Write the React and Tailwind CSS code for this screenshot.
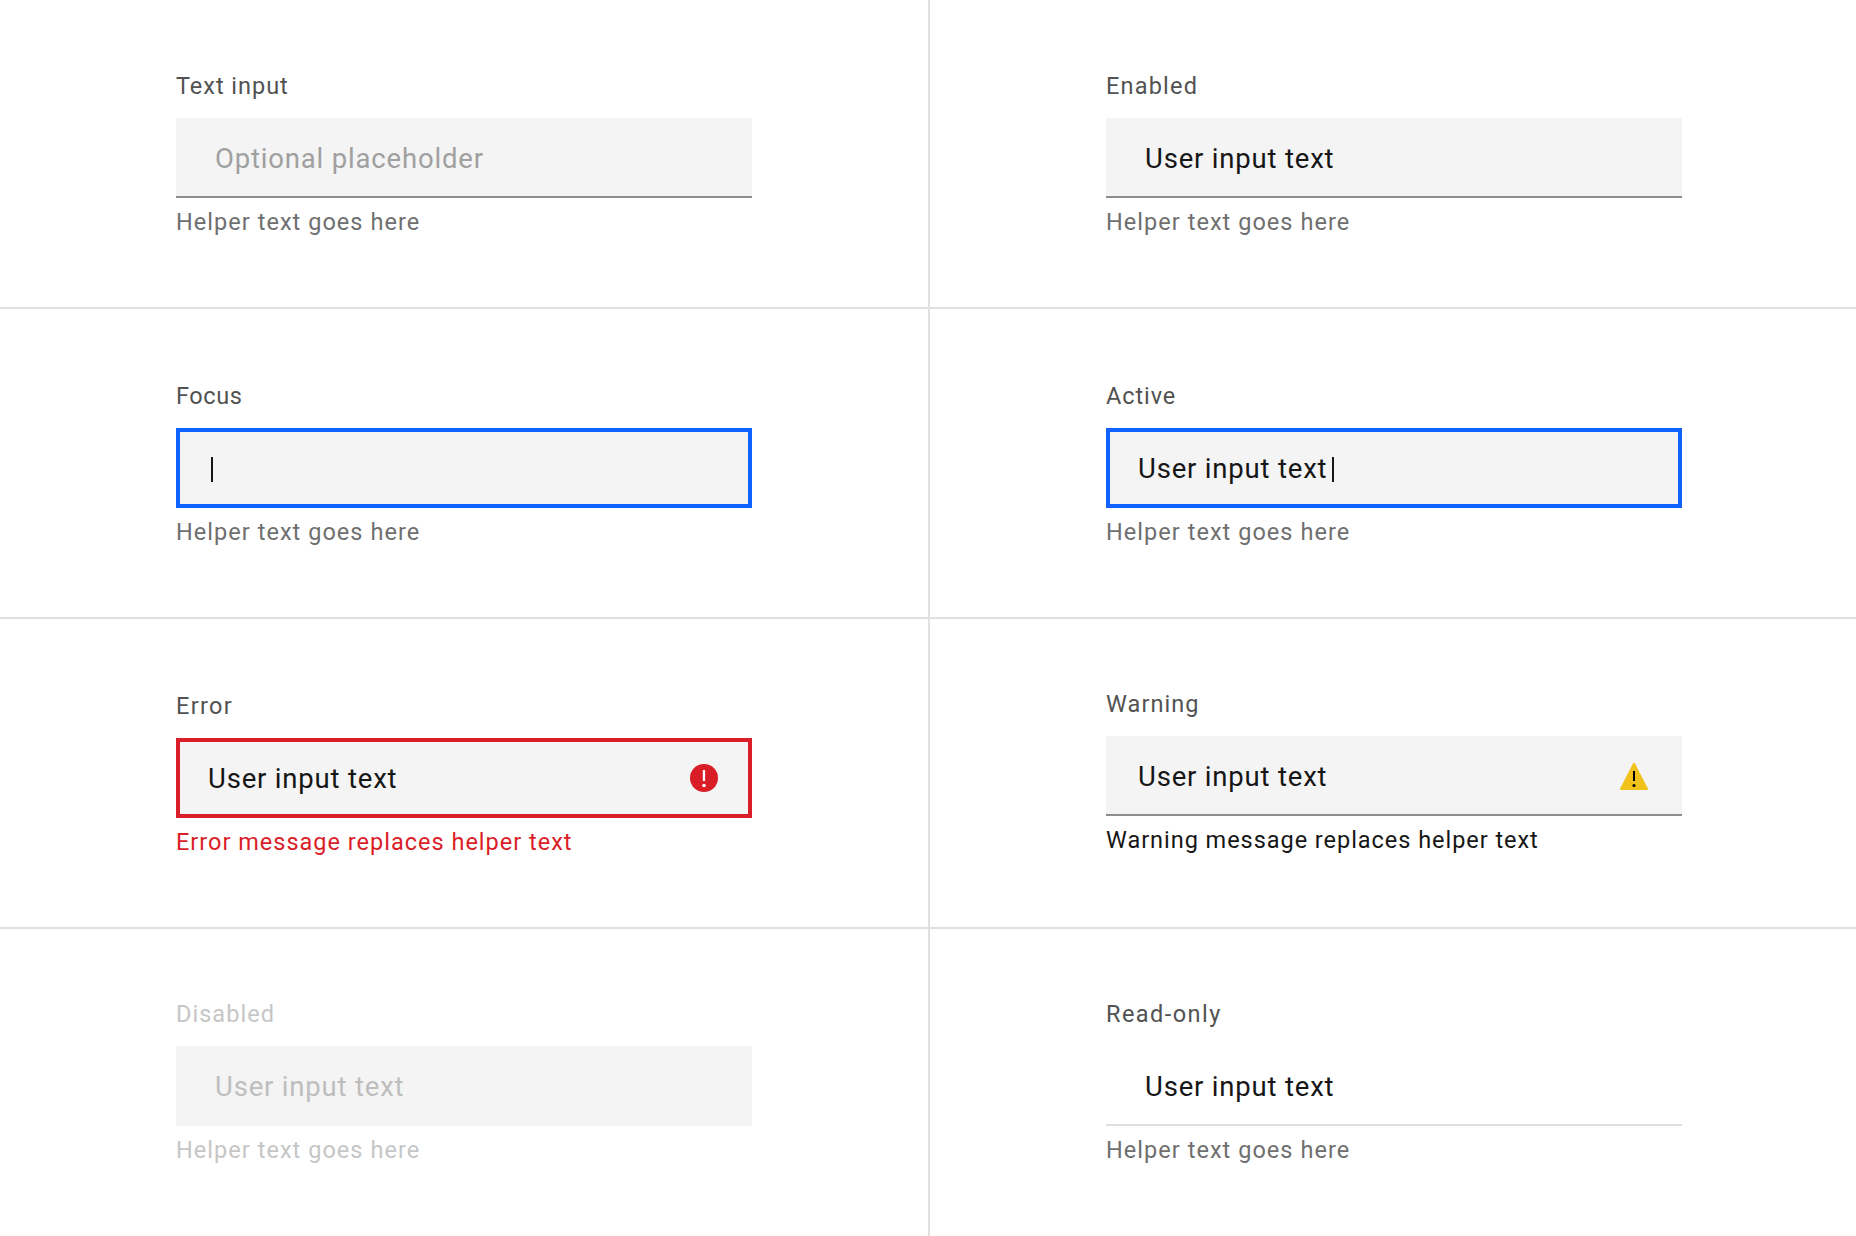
function ErrorIcon() {
  return (
    <svg width="28" height="28" viewBox="0 0 28 28" className="shrink-0">
      <circle cx="14" cy="14" r="14" fill="#da1e28" />
      <rect x="12.8" y="6" width="2.3" height="11" fill="#fff" />
      <circle cx="14" cy="21.4" r="1.75" fill="#fff" />
    </svg>
  );
}

function WarningIcon() {
  return (
    <svg width="28" height="28" viewBox="0 0 28 28" className="shrink-0">
      <path
        d="M13.1 1.3a1 1 0 0 1 1.8 0L27.9 26.6a.9.9 0 0 1-.8 1.3H.9a.9.9 0 0 1-.8-1.3Z"
        fill="#f1c21b"
      />
      <rect x="13" y="9" width="2" height="10" fill="#000" />
      <circle cx="14" cy="23.5" r="1.6" fill="#000" />
    </svg>
  );
}

function Caret({ className = "" }) {
  return <span className={`mt-[3px] h-[25px] w-0.5 shrink-0 bg-[#161616] ${className}`} />;
}

const boxStyles = {
  underline: "bg-[#f4f4f4] shadow-[inset_0_-2px_0_#8d8d8d]",
  focus: "bg-[#f4f4f4] shadow-[inset_0_0_0_4px_#0f62fe]",
  error: "bg-[#f4f4f4] shadow-[inset_0_0_0_4px_#da1e28]",
  disabled: "bg-[#f4f4f4]",
  readonly: "shadow-[inset_0_-2px_0_#e0e0e0]",
};

function Field({
  label,
  labelClass,
  box,
  pad = "pl-[39px]",
  value,
  valueClass = "tracking-[0.81px] text-[#161616]",
  helper = "Helper text goes here",
  helperClass = "tracking-[1.04px] text-[#6f6f6f]",
  caret,
  icon,
}) {
  return (
    <div className="flex w-[576px] flex-col">
      <div className={`mb-4 text-[23.5px] leading-8 ${labelClass}`}>{label}</div>
      <div className={`flex h-20 items-center pr-[34px] ${pad} ${boxStyles[box]}`}>
        {value && (
          <span className={`pt-px text-[27.5px] leading-10 ${valueClass}`}>{value}</span>
        )}
        {caret}
        {icon && <span className="ml-auto">{icon}</span>}
      </div>
      <div className={`mt-2 text-[23.5px] leading-8 ${helperClass}`}>{helper}</div>
    </div>
  );
}

function Cell({ className, children }) {
  return <section className={`border-[#e0e0e0] pl-44 ${className}`}>{children}</section>;
}

export default function App() {
  return (
    <main className="grid h-[1236px] w-[1856px] grid-cols-[930px_926px] grid-rows-[309px_310px_310px_307px] overflow-hidden whitespace-nowrap bg-white font-['Roboto',sans-serif]">
      <Cell className="border-r-2 border-b-2 pt-[70px]">
        <Field
          label="Text input"
          labelClass="tracking-[0.97px] text-[#525252]"
          box="underline"
          value="Optional placeholder"
          valueClass="tracking-[0.82px] text-[#a0a0a0]"
        />
      </Cell>
      <Cell className="border-b-2 pt-[70px]">
        <Field
          label="Enabled"
          labelClass="tracking-[1.2px] text-[#525252]"
          box="underline"
          value="User input text"
        />
      </Cell>
      <Cell className="border-r-2 border-b-2 pt-[71px]">
        <Field
          label="Focus"
          labelClass="tracking-[0.6px] text-[#525252]"
          box="focus"
          pad="pl-[35px]"
          caret={<Caret />}
        />
      </Cell>
      <Cell className="border-b-2 pt-[71px]">
        <Field
          label="Active"
          labelClass="tracking-[0.9px] text-[#525252]"
          box="focus"
          pad="pl-8"
          value="User input text"
          caret={<Caret className="ml-[5px]" />}
        />
      </Cell>
      <Cell className="border-r-2 border-b-2 pt-[71px]">
        <Field
          label="Error"
          labelClass="tracking-[1.3px] text-[#525252]"
          box="error"
          pad="pl-8"
          value="User input text"
          icon={<ErrorIcon />}
          helper="Error message replaces helper text"
          helperClass="tracking-[1px] text-[#da1e28]"
        />
      </Cell>
      <Cell className="border-b-2 pt-[69px]">
        <Field
          label="Warning"
          labelClass="tracking-[1.08px] text-[#525252]"
          box="underline"
          pad="pl-8"
          value="User input text"
          icon={<WarningIcon />}
          helper="Warning message replaces helper text"
          helperClass="tracking-[0.96px] text-[#161616]"
        />
      </Cell>
      <Cell className="border-r-2 pt-[69px]">
        <Field
          label="Disabled"
          labelClass="tracking-[1.03px] text-[#c6c6c6]"
          box="disabled"
          value="User input text"
          valueClass="tracking-[0.81px] text-[#bebebe]"
          helperClass="tracking-[1.04px] text-[#c6c6c6]"
        />
      </Cell>
      <Cell className="pt-[69px]">
        <Field
          label="Read-only"
          labelClass="tracking-[1.45px] text-[#525252]"
          box="readonly"
          value="User input text"
        />
      </Cell>
    </main>
  );
}
